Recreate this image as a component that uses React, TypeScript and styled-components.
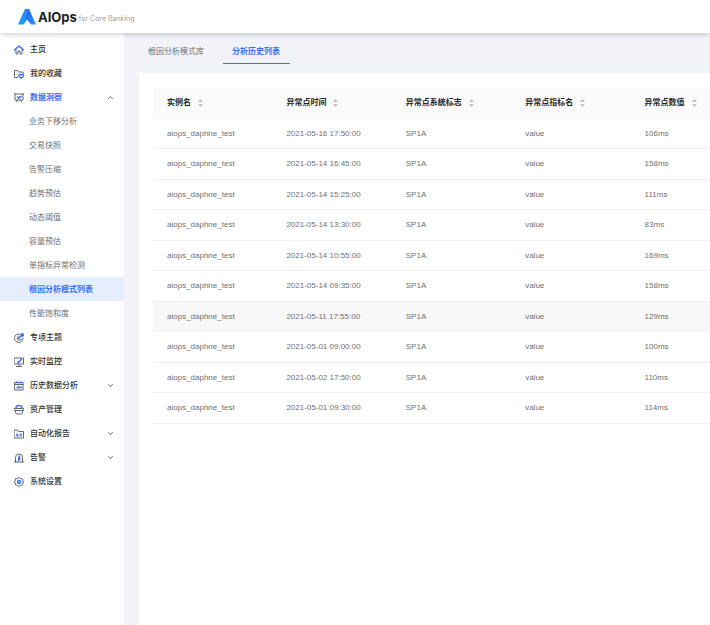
import React, { useState } from "react";
import styled, { createGlobalStyle, css } from "styled-components";

const BLUE = "#3470ff";
const INK = "#63666c";

const GlobalStyle = createGlobalStyle`
  *, *::before, *::after { box-sizing: border-box; }
  body {
    margin: 0;
    background: #f1f3f8;
    color: #707070;
    font-family: "Liberation Sans", "Noto Sans CJK SC", sans-serif;
    font-size: 8px;
    line-height: 12px;
  }
  button { font: inherit; color: inherit; border: 0; padding: 0; background: none; cursor: pointer; }
  a { color: inherit; text-decoration: none; }
  ul { list-style: none; margin: 0; padding: 0; }
`;

const Page = styled.div`
  display: flex;
  flex-direction: column;
  min-height: 100vh;
`;

const Header = styled.header`
  display: flex;
  align-items: center;
  height: 33px;
  padding-left: 18px;
  background: #fff;
  box-shadow: 0 1px 5px rgba(0, 0, 0, 0.22);
  z-index: 1;
`;

const Brand = styled.a`
  display: flex;
  align-items: center;
  gap: 2px;
`;

const BrandName = styled.span`
  font-family: Inter, sans-serif;
  font-size: 13px;
  font-weight: 700;
  line-height: 18px;
  color: #1d1f24;
`;

const BrandNote = styled.span`
  font-family: Inter, sans-serif;
  font-size: 7px;
  line-height: 10px;
  padding-top: 4px;
  color: #a0a0a0;
`;

const Body = styled.div`
  display: flex;
  flex: 1;
`;

const Sidebar = styled.nav`
  flex: 0 0 124px;
  padding-top: 4px;
  background: #fff;
`;

const rowStyle = css`
  display: flex;
  align-items: center;
  width: 100%;
  height: 24px;
  padding-top: 1px;
  text-align: left;
`;

const itemStyle = css<{ $active?: boolean }>`
  ${rowStyle}
  gap: 6px;
  padding: 1px 11px 0 14px;
  font-weight: ${(p) => (p.$active ? 700 : 500)};
  color: ${(p) => (p.$active ? BLUE : "#333")};
`;

const NavLink = styled.a<{ $active?: boolean }>`
  ${itemStyle}
`;

const NavToggle = styled.button<{ $active?: boolean }>`
  && {
    ${itemStyle}
  }
`;

const NavLabel = styled.span`
  flex: 1;
`;

const SubLink = styled.a<{ $active?: boolean }>`
  ${rowStyle}
  padding-left: 29px;
  color: ${(p) => (p.$active ? BLUE : "#707070")};
  background: ${(p) => (p.$active ? "#e6edff" : "transparent")};
  font-weight: ${(p) => (p.$active ? 700 : 400)};
`;

const Main = styled.main`
  display: flex;
  flex: 1;
  flex-direction: column;
  min-width: 0;
  padding-left: 15px;
`;

const Tabs = styled.div`
  display: flex;
  gap: 9px;
  height: 40px;
`;

const Tab = styled.button<{ $active?: boolean }>`
  && {
    height: 31px;
    padding: 8px 10px 0 9px;
    border-bottom: 1px solid ${(p) => (p.$active ? BLUE : "transparent")};
    color: ${(p) => (p.$active ? BLUE : "#707070")};
    font-weight: ${(p) => (p.$active ? 700 : 400)};
  }
`;

const Panel = styled.section`
  flex: 1;
  padding: 15px 0 0 14px;
  background: #fff;
`;

const TableScroll = styled.div`
  overflow-x: auto;
  scrollbar-width: none;
`;

const Table = styled.table`
  width: 100%;
  min-width: 597px;
  table-layout: fixed;
  border-collapse: separate;
  border-spacing: 0;
`;

const HeadCell = styled.th`
  height: 31px;
  padding: 0 0 0 14px;
  border-bottom: 1px solid #f2f2f2;
  background: #fafafa;
  text-align: left;
`;

const SortButton = styled.button`
  && {
    display: flex;
    align-items: center;
    gap: 7px;
    font-weight: 700;
    color: #262626;
  }
`;

const Row = styled.tr<{ $hover?: boolean }>`
  height: 30px;
  background: ${(p) => (p.$hover ? "#f8f8f8" : "#fff")};

  &:nth-child(even) {
    height: 31px;
  }
`;

const Cell = styled.td`
  padding: 0 0 0 14px;
  border-bottom: 1px solid #f0f0f0;
`;

const Svg = styled.svg`
  flex: none;
  display: block;
  fill: none;
  stroke: ${INK};
  stroke-width: 2;
  stroke-linecap: round;
  stroke-linejoin: round;
`;

const Accent = styled.g`
  stroke: ${BLUE};
`;

const icons: Record<string, React.ReactNode> = {
  home: (
    <>
      <path d="M4 10v8h4v-6h4v6h4v-8" />
      <Accent><path d="M1 10l9-8 9 8" strokeWidth="3" /></Accent>
    </>
  ),
  favorite: (
    <>
      <path d="M7 17H2a1 1 0 0 1-1-1V3h6l2 3h9v3" />
      <Accent><path d="M14.500 18.500l-5-4c-1-4 3-5 5-2 2-3 6-2 5 2z" strokeWidth="2.500" /></Accent>
    </>
  ),
  insight: (
    <>
      <path d="M1 2h18M2 2v12h16V2M7 14l-2 4M13 14l2 4" />
      <Accent><path d="M7 8l2 2 5-3" strokeWidth="3" /></Accent>
    </>
  ),
  topic: (
    <>
      <path d="M11 2a8.500 8.500 0 1 0 7 8M9 6a4.500 4.500 0 1 0 6 6" />
      <Accent><path d="M9 11l5-5M14 6V3l3-2v3h3l-3 2z" strokeWidth="3" /></Accent>
    </>
  ),
  monitor: (
    <>
      <path d="M1 2h18v12H1zM10 14v4M5 19h10" />
      <Accent><path d="M7 11l4-2 4-5" strokeWidth="3" /></Accent>
    </>
  ),
  history: (
    <>
      <path d="M2 3h16v15H2zM2 7h16M6 1v2M14 1v2" />
      <Accent><path d="M3 3h14M6 14l3-3 3 3 3-2" strokeWidth="2.500" /></Accent>
    </>
  ),
  asset: (
    <>
      <path d="M1 7h18v4H1zM3 11v4q0 3 3 3h8q3 0 3-3v-4" />
      <Accent><path d="M4 5q1-4 6-4t6 4" strokeWidth="3" /></Accent>
    </>
  ),
  report: (
    <>
      <path d="M1 2h6l2 3h10v13H1z" />
      <Accent><path d="M7 10l-2 2 2 2M13 10l2 2-2 2M10 12v1" strokeWidth="2.500" /></Accent>
    </>
  ),
  alarm: (
    <>
      <path d="M3 18V9a7 7 0 0 1 14 0v9M1 18h18" />
      <Accent><path d="M11 6l-2 5h3l-3 4" strokeWidth="3" /></Accent>
    </>
  ),
  settings: (
    <>
      <path d="M7 3l3-2 3 2 4 1 1 4 1 2-1 2-1 4-4 1-3 2-3-2-4-1-1-4-1-2 1-2 1-4z" />
      <Accent><circle cx="10" cy="10" r="3" strokeWidth="3" /></Accent>
    </>
  ),
};

const Icon = ({ name }: { name: string }) => (
  <Svg width="10" height="10" viewBox="0 0 20 20" aria-hidden="true">{icons[name]}</Svg>
);

const Chevron = ({ up }: { up?: boolean }) => (
  <Svg width="5" height="5" viewBox="0 0 10 10" aria-hidden="true">
    <path d={up ? "M1 7l4-4 4 4" : "M1 3l4 4 4-4"} />
  </Svg>
);

const SorterSvg = styled.svg`
  display: block;
  fill: #bfbfbf;
`;

const Sorter = () => (
  <SorterSvg width="5" height="8" viewBox="0 0 5 8" aria-hidden="true">
    <path d="M2.500 0L5 3H0zM2.500 8L5 5H0z" />
  </SorterSvg>
);

const Logo = () => (
  <svg width="18" height="16" viewBox="0 0 36 32" aria-hidden="true">
    <defs>
      <linearGradient id="logoLeft" x1="0" y1="1" x2="1" y2="0">
        <stop offset="0" stopColor="#17a0fb" />
        <stop offset="1" stopColor="#2f7df6" />
      </linearGradient>
      <linearGradient id="logoRight" x1="0" y1="0" x2="1" y2="1">
        <stop offset="0" stopColor="#1b62e8" />
        <stop offset="1" stopColor="#2e8fff" />
      </linearGradient>
    </defs>
    <path d="M14 0h8l3 8-7 14-7 9H0z" fill="url(#logoLeft)" />
    <path d="M22 0l14 31H26l-8-10-3-3z" fill="url(#logoRight)" />
  </svg>
);

type Item = { icon: string; label: string; children?: string[]; group?: boolean };

const items: Item[] = [
  { icon: "home", label: "主页" },
  { icon: "favorite", label: "我的收藏" },
  {
    icon: "insight",
    label: "数据洞察",
    group: true,
    children: [
      "业务下移分析", "交易快照", "告警压缩", "趋势预估", "动态阈值",
      "容量预估", "单指标异常检测", "根因分析模式列表", "性能饱和度",
    ],
  },
  { icon: "topic", label: "专项主题" },
  { icon: "monitor", label: "实时监控" },
  { icon: "history", label: "历史数据分析", group: true },
  { icon: "asset", label: "资产管理" },
  { icon: "report", label: "自动化报告", group: true },
  { icon: "alarm", label: "告警", group: true },
  { icon: "settings", label: "系统设置" },
];

const tabs = ["根因分析模式库", "分析历史列表"];
const columns = ["实例名", "异常点时间", "异常点系统标志", "异常点指标名", "异常点数值"];

const records = [
  ["2021-05-16 17:50:00", "106ms"],
  ["2021-05-14 16:45:00", "158ms"],
  ["2021-05-14 15:25:00", "111ms"],
  ["2021-05-14 13:30:00", "83ms"],
  ["2021-05-14 10:55:00", "169ms"],
  ["2021-05-14 09:35:00", "158ms"],
  ["2021-05-11 17:55:00", "129ms"],
  ["2021-05-01 09:00:00", "100ms"],
  ["2021-05-02 17:50:00", "110ms"],
  ["2021-05-01 09:30:00", "114ms"],
];

export default function App() {
  const [open, setOpen] = useState("数据洞察");
  const [page, setPage] = useState("根因分析模式列表");
  const [tab, setTab] = useState(tabs[1]);
  const [hovered, setHovered] = useState(6);

  return (
    <Page lang="zh-CN">
      <GlobalStyle />
      <Header>
        <Brand href="#">
          <Logo />
          <BrandName>AIOps</BrandName>
          <BrandNote>for Core Banking</BrandNote>
        </Brand>
      </Header>
      <Body>
        <Sidebar>
          <ul>
            {items.map((item) => {
              const expanded = open === item.label;
              return (
                <li key={item.label}>
                  {item.group ? (
                    <NavToggle
                      type="button"
                      aria-expanded={expanded}
                      $active={item.children?.includes(page)}
                      onClick={() => setOpen(expanded ? "" : item.label)}
                    >
                      <Icon name={item.icon} />
                      <NavLabel>{item.label}</NavLabel>
                      <Chevron up={expanded} />
                    </NavToggle>
                  ) : (
                    <NavLink href="#">
                      <Icon name={item.icon} />
                      <NavLabel>{item.label}</NavLabel>
                    </NavLink>
                  )}
                  {expanded && item.children && (
                    <ul>
                      {item.children.map((child) => (
                        <li key={child}>
                          <SubLink href="#" $active={child === page} onClick={() => setPage(child)}>
                            {child}
                          </SubLink>
                        </li>
                      ))}
                    </ul>
                  )}
                </li>
              );
            })}
          </ul>
        </Sidebar>
        <Main>
          <Tabs role="tablist">
            {tabs.map((name) => (
              <Tab
                key={name}
                type="button"
                role="tab"
                aria-selected={name === tab}
                $active={name === tab}
                onClick={() => setTab(name)}
              >
                {name}
              </Tab>
            ))}
          </Tabs>
          <Panel>
            <TableScroll>
              <Table>
                <thead>
                  <tr>
                    {columns.map((name) => (
                      <HeadCell key={name} scope="col">
                        <SortButton type="button">
                          {name}
                          <Sorter />
                        </SortButton>
                      </HeadCell>
                    ))}
                  </tr>
                </thead>
                <tbody>
                  {records.map(([time, value], i) => (
                    <Row key={time} $hover={i === hovered} onMouseEnter={() => setHovered(i)}>
                      <Cell>aiops_daphne_test</Cell>
                      <Cell>{time}</Cell>
                      <Cell>SP1A</Cell>
                      <Cell>value</Cell>
                      <Cell>{value}</Cell>
                    </Row>
                  ))}
                </tbody>
              </Table>
            </TableScroll>
          </Panel>
        </Main>
      </Body>
    </Page>
  );
}
